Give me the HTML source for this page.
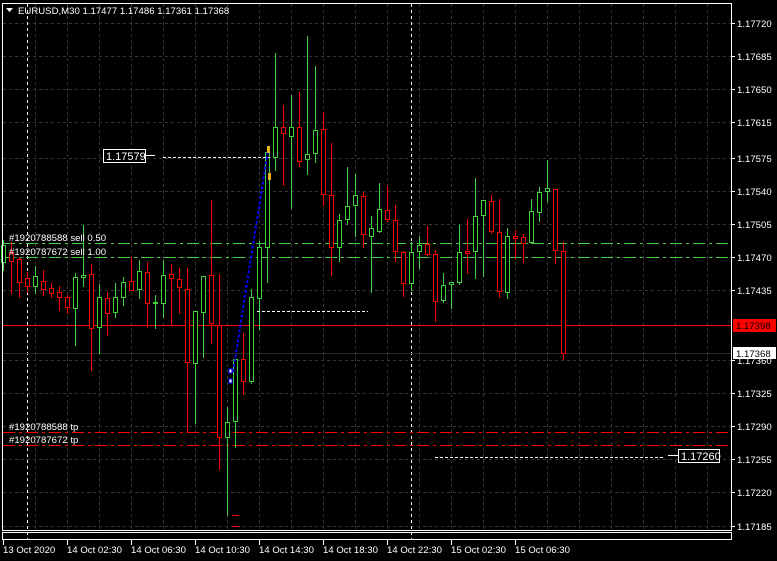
<!DOCTYPE html>
<html><head><meta charset="utf-8"><style>
html,body{margin:0;padding:0;background:#000;width:777px;height:561px;overflow:hidden}
svg{display:block}
text{font-family:"Liberation Sans",sans-serif;font-size:9.6px;fill:#fff}
</style></head><body>
<svg id="s" width="777" height="561" xmlns="http://www.w3.org/2000/svg" shape-rendering="crispEdges">
<rect width="777" height="561" fill="#000"/>
<g id="grid" stroke="#363636" stroke-width="1" stroke-dasharray="3,3"></g>
<g id="lines"></g>
<g id="candles"></g>
<g id="over"></g>
</svg>
<script>
var NS="http://www.w3.org/2000/svg";
function el(p,t,a,txt){var e=document.createElementNS(NS,t);for(var k in a)e.setAttribute(k,a[k]);if(txt!==undefined)e.textContent=txt;p.appendChild(e);return e;}
var s=document.getElementById('s'),grid=document.getElementById('grid'),lines=document.getElementById('lines'),cg=document.getElementById('candles'),ov=document.getElementById('over');
var G='#40d040',R='#ff0000';
var labels=[["1.17720",23],["1.17685",56],["1.17650",89],["1.17615",122],["1.17575",158],["1.17540",191],["1.17505",224],["1.17470",257],["1.17435",290],["1.17360",360],["1.17325",393],["1.17290",426],["1.17255",459],["1.17220",492],["1.17185",526]];
labels.forEach(function(l){el(grid,'line',{x1:3,x2:731,y1:l[1]+.5,y2:l[1]+.5});});
for(var x=35;x<731;x+=32)el(grid,'line',{x1:x+.5,x2:x+.5,y1:4,y2:530});
[27,411].forEach(function(x){el(lines,'line',{x1:x+.5,x2:x+.5,y1:4,y2:540,stroke:'#fff','stroke-dasharray':'3,3'});});
el(lines,'line',{x1:3,x2:731,y1:243.5,y2:243.5,stroke:G,'stroke-dasharray':'12,4,3,4'});
el(lines,'line',{x1:3,x2:731,y1:257.5,y2:257.5,stroke:G,'stroke-dasharray':'12,4,3,4'});
el(lines,'line',{x1:3,x2:731,y1:432.5,y2:432.5,stroke:R,'stroke-dasharray':'12,4,3,4'});
el(lines,'line',{x1:3,x2:731,y1:445.5,y2:445.5,stroke:R,'stroke-dasharray':'12,4,3,4'});
el(lines,'line',{x1:3,x2:731,y1:325.5,y2:325.5,stroke:R});
el(lines,'line',{x1:3,x2:731,y1:353.5,y2:353.5,stroke:'#2a2a2a'});
var d=[['g',240,245,262,270],['r',242,253,261,293],['r',257,259,282,297],['r',272,278,286,292],['g',266,276,286,293],['r',270,281,289,295],['r',283,288,293,297],['r',286,292,297,310],['r',295,297,307,313],['g',273,277,308,345],['g',225,275,277,286],['r',264,274,328,370],['g',284,297,327,353],['r',292,298,313,335],['g',283,297,312,317],['g',277,282,297,305],['r',257,281,290,290],['g',260,271,289,298],['r',262,272,303,327],['g',295,302,303,328],['g',260,275,303,317],['r',264,274,278,325],['r',268,279,287,313],['r',268,289,362,432],['g',311,311,363,423],['g',276,276,312,357],['r',200,275,323,343],['r',274,325,437,469],['g',407,422,437,515],['g',359,359,421,447],['r',333,359,381,394],['g',289,297,381,383],['g',241,247,298,329],['g',147,152,247,282],['g',53,127,157,170],['r',105,127,133,185],['g',95,127,136,208],['r',92,127,161,166],['g',36,154,159,174],['g',66,130,153,162],['r',112,129,194,205],['r',143,195,247,275],['g',214,220,247,261],['g',167,206,219,224],['g',174,195,205,236],['r',192,196,234,247],['g',216,228,236,292],['g',183,209,231,232],['r',186,210,219,221],['r',205,220,251,261],['r',251,252,283,296],['g',242,252,283,290],['g',236,245,251,268],['r',226,244,254,255],['r',250,254,301,321],['g',273,285,300,302],['g',282,282,284,308],['g',225,252,282,284],['r',219,251,253,273],['g',178,216,251,278],['g',200,200,215,276],['r',195,201,231,233],['r',199,232,291,297],['g',228,236,292,298],['r',230,236,238,258],['r',234,237,243,262],['g',199,211,242,243],['g',187,192,212,221],['g',160,188,191,201],['r',189,189,250,263],['r',242,251,353,359]];
d.forEach(function(c,k){var cx=3+8*k,col=c[0]=='g'?G:R;
el(cg,'rect',{x:cx,y:c[1],width:1,height:c[4]-c[1]+1,fill:col});
var h=c[3]-c[2];
if(h<2){el(cg,'rect',{x:cx-2,y:c[2],width:5,height:2,fill:col});}
else{el(cg,'rect',{x:cx-2,y:c[2],width:5,height:h+1,fill:col});el(cg,'rect',{x:cx-1,y:c[2]+1,width:3,height:h-1,fill:'#000'});}});
el(ov,'line',{x1:233,y1:372,x2:268,y2:150,stroke:'#0000ff','stroke-width':2,'stroke-dasharray':'3,2','shape-rendering':'auto'});
el(ov,'path',{d:'M229 369h3v4h-3zM229 379h3v4h-3z',fill:'#fff',stroke:'#0000ff'});
el(ov,'rect',{x:267,y:146,width:3,height:7,fill:'#e8b020'});
el(ov,'rect',{x:268,y:173,width:3,height:7,fill:'#e8b020'});
el(ov,'rect',{x:232,y:515,width:7,height:1,fill:R});
el(ov,'rect',{x:232,y:526,width:7,height:1,fill:R});
el(ov,'line',{x1:163,x2:270,y1:157.5,y2:157.5,stroke:'#fff','stroke-dasharray':'3,2'});
el(ov,'line',{x1:145,x2:155,y1:155.5,y2:155.5,stroke:'#fff'});
el(ov,'rect',{x:103.5,y:149.5,width:42,height:13,fill:'#000',stroke:'#fff'});
el(ov,'text',{x:106,y:160,style:'font-size:11px'},'1.17579');
el(ov,'line',{x1:257,x2:368,y1:311.5,y2:311.5,stroke:'#fff','stroke-dasharray':'3,2'});
el(ov,'line',{x1:435,x2:665,y1:457.5,y2:457.5,stroke:'#fff','stroke-dasharray':'3,2'});
el(ov,'line',{x1:668,x2:678,y1:455.5,y2:455.5,stroke:'#fff'});
el(ov,'rect',{x:678.5,y:449.5,width:41,height:13,fill:'#000',stroke:'#fff'});
el(ov,'text',{x:681,y:460,style:'font-size:11px'},'1.17260');
el(ov,'text',{x:9,y:241},'#1920788588 sell 0.50');
el(ov,'text',{x:9,y:255},'#1920787672 sell 1.00');
el(ov,'text',{x:9,y:430},'#1920788588 tp');
el(ov,'text',{x:9,y:443},'#1920787672 tp');
el(ov,'rect',{x:2.5,y:3.5,width:729,height:527,fill:'none',stroke:'#fff'});
el(ov,'rect',{x:2.5,y:532.5,width:729,height:7,fill:'none',stroke:'#fff'});
labels.forEach(function(l){el(ov,'line',{x1:731,x2:735,y1:l[1]+.5,y2:l[1]+.5,stroke:'#fff'});el(ov,'text',{x:737,y:l[1]+4},l[0]);});
el(ov,'rect',{x:733,y:319,width:43,height:13,fill:R});
el(ov,'text',{x:736,y:329,style:'fill:#000'},'1.17398');
el(ov,'rect',{x:733,y:347,width:43,height:12,fill:'#fff'});
el(ov,'text',{x:736,y:357,style:'fill:#000'},'1.17368');
var tl=['13 Oct 2020','14 Oct 02:30','14 Oct 06:30','14 Oct 10:30','14 Oct 14:30','14 Oct 18:30','14 Oct 22:30','15 Oct 02:30','15 Oct 06:30'];
tl.forEach(function(t,i){var x=3+64*i;el(ov,'line',{x1:x+.5,x2:x+.5,y1:540,y2:545,stroke:'#fff'});el(ov,'text',{x:x,y:553},t);});
el(ov,'path',{d:'M6 8h7l-3.5 4z',fill:'#fff','shape-rendering':'auto'});
el(ov,'text',{x:18,y:14},'EURUSD,M30  1.17477 1.17486 1.17361 1.17368');
</script>
</body></html>
